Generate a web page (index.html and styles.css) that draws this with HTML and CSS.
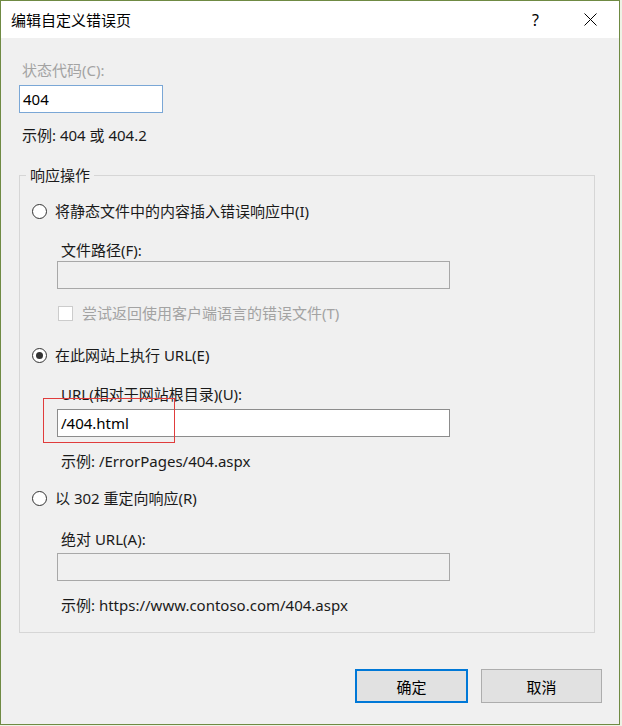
FILE: index.html
```html
<!DOCTYPE html>
<html lang="zh-CN">
<head>
<meta charset="utf-8">
<title>编辑自定义错误页</title>
<link rel="stylesheet" href="styles.css">
</head>
<body>
<div class="window">
  <div class="titlebar">
    <span class="title">编辑自定义错误页</span>
    <span class="help">?</span>
    <span class="close"><svg width="13" height="13" viewBox="0 0 13 13"><path d="M0.5 0.5 L12.5 12.5 M12.5 0.5 L0.5 12.5" stroke="#000" stroke-width="1" fill="none"/></svg></span>
  </div>
  <div class="content">
    <div class="row disabled label-status">状态代码(C):</div>
    <div class="input focused code">404</div>
    <div class="row example-code">示例: 404 或 404.2</div>
    <fieldset class="group">
      <legend>响应操作</legend>
      <div class="row radio-row r1"><span class="radio"></span><span>将静态文件中的内容插入错误响应中(I)</span></div>
      <div class="row sub l-file">文件路径(F):</div>
      <div class="input disabled-input in-file"></div>
      <div class="row check-row"><span class="checkbox"></span><span class="disabled">尝试返回使用客户端语言的错误文件(T)</span></div>
      <div class="row radio-row r2"><span class="radio checked"></span><span>在此网站上执行 URL(E)</span></div>
      <div class="row sub l-url">URL(相对于网站根目录)(U):</div>
      <div class="input in-url">/404.html</div>
      <div class="row sub ex-url">示例: /ErrorPages/404.aspx</div>
      <div class="row radio-row r3"><span class="radio"></span><span>以 302 重定向响应(R)</span></div>
      <div class="row sub l-abs">绝对 URL(A):</div>
      <div class="input disabled-input in-abs"></div>
      <div class="row sub ex-abs">示例: https://www.contoso.com/404.aspx</div>
      <div class="highlight"></div>
    </fieldset>
    <div class="buttons">
      <div class="btn default">确定</div>
      <div class="btn">取消</div>
    </div>
  </div>
</div>
</body>
</html>
```
FILE: styles.css
```css
html, body {
  margin: 0;
  padding: 0;
}
body {
  background: #eef3e6;
  font-family: "Noto Sans", "Noto Sans CJK SC", sans-serif;
  font-size: 15px;
  color: #1a1a1a;
  width: 622px;
  height: 726px;
  overflow: hidden;
}
.window {
  box-sizing: border-box;
  width: 620px;
  height: 725px;
  border: 1px solid #6f8a43;
  background: #f0f0f0;
  display: flex;
  flex-direction: column;
}
.titlebar {
  height: 37px;
  background: #ffffff;
  display: flex;
  align-items: center;
  padding-left: 10px;
  flex-shrink: 0;
}
.title {
  font-size: 15px;
  color: #000;
  flex: 1;
}
.help {
  font-size: 16px;
  color: #000;
  width: 20px;
  margin-right: 32px;
}
.close {
  width: 13px;
  height: 13px;
  display: flex;
  margin-right: 22px;
}
.content {
  padding: 0 0 0 18px;
  display: flex;
  flex-direction: column;
}
.row {
  height: 20px;
  line-height: 20px;
  white-space: nowrap;
  display: flex;
  align-items: center;
}
.disabled {
  color: #a3a3a3;
}
.label-status {
  margin-top: 22px;
  margin-left: 3px;
}
.input {
  box-sizing: border-box;
  height: 28px;
  line-height: 26px;
  border: 1px solid #8c8c8c;
  background: #fff;
  padding-left: 3px;
  color: #000;
}
.focused {
  border-color: #7aa7d6;
}
.code {
  margin-top: 5px;
  width: 144px;
}
.example-code {
  margin-top: 12px;
  margin-left: 3px;
}
.group {
  position: relative;
  margin: 20px 0 0 0;
  width: 576px;
  box-sizing: border-box;
  border: 1px solid #d6d6d6;
  padding: 0 0 17px 0;
  min-width: 0;
}
.group legend {
  padding: 0 4px;
  margin-left: 6px;
  height: 20px;
  line-height: 20px;
}
.radio-row {
  margin-left: 12px;
  gap: 8px;
}
.radio {
  box-sizing: border-box;
  width: 15px;
  height: 15px;
  border-radius: 50%;
  border: 1px solid #333;
  background: #fff;
  display: flex;
  align-items: center;
  justify-content: center;
}
.radio.checked::after {
  content: "";
  width: 7px;
  height: 7px;
  border-radius: 50%;
  background: #333;
}
.r1 { margin-top: 16px; }
.sub { margin-left: 41px; }
.l-file { margin-top: 19px; }
.in-file { margin-top: 1px; }
.disabled-input {
  background: #f0f0f0;
  border-color: #a8a8a8;
}
.in-file, .in-url, .in-abs {
  margin-left: 37px;
  width: 393px;
}
.check-row {
  margin-top: 14px;
  margin-left: 38px;
  gap: 9px;
}
.checkbox {
  box-sizing: border-box;
  width: 15px;
  height: 15px;
  border: 1px solid #cccccc;
  background: #fff;
}
.r2 { margin-top: 22px; }
.l-url { margin-top: 19px; }
.in-url { margin-top: 5px; }
.ex-url { margin-top: 14px; }
.r3 { margin-top: 17px; }
.l-abs { margin-top: 21px; }
.in-abs { margin-top: 4px; }
.ex-abs { margin-top: 14px; }
.highlight {
  position: absolute;
  z-index: 2;
  left: 23px;
  top: 213px;
  width: 132px;
  height: 45px;
  box-sizing: border-box;
  border: 1px solid #e03c3c;
  pointer-events: none;
}
.buttons {
  display: flex;
  justify-content: flex-end;
  gap: 13px;
  margin-top: 36px;
  padding-right: 17px;
}
.btn {
  box-sizing: border-box;
  height: 34px;
  width: 121px;
  background: #e1e1e1;
  border: 1px solid #adadad;
  display: flex;
  align-items: center;
  justify-content: center;
  color: #000;
}
.btn.default {
  width: 113px;
  border: 2px solid #0078d7;
}
```
